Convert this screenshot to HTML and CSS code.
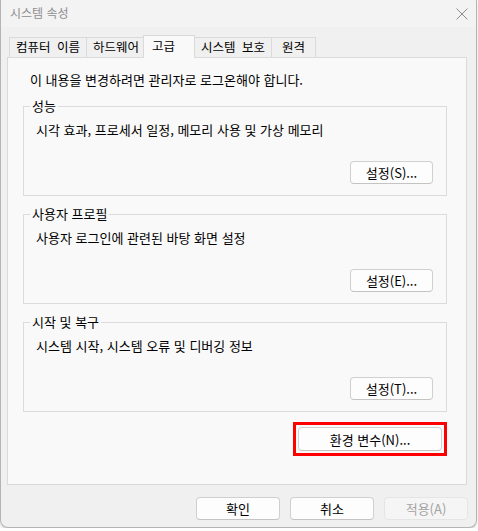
FILE: index.html
```html
<!DOCTYPE html>
<html lang="ko">
<head>
    <meta charset="UTF-8">
    <meta name="viewport" content="width=device-width, initial-scale=1.0">
    <title>시스템 속성</title>
    <link rel="stylesheet" href="styles.css">
</head>
<body>
    <div class="window">
        <div class="titlebar">
            <span class="title">시스템 속성</span>
            <svg class="close" width="12" height="12" viewBox="0 0 12 12">
                <path d="M0.5 0.5 L11.5 11.5 M11.5 0.5 L0.5 11.5" stroke="#8c8c8c" stroke-width="1" fill="none"/>
            </svg>
        </div>

        <div class="dialog">
            <div class="tabs">
                <div class="tab">컴퓨터 이름</div>
                <div class="tab">하드웨어</div>
                <div class="tab active">고급</div>
                <div class="tab">시스템 보호</div>
                <div class="tab">원격</div>
            </div>

            <div class="panel">
                <p class="intro">이 내용을 변경하려면 관리자로 로그온해야 합니다.</p>

                <fieldset class="group">
                    <legend>성능</legend>
                    <p>시각 효과, 프로세서 일정, 메모리 사용 및 가상 메모리</p>
                    <button class="btn">설정(S)...</button>
                </fieldset>

                <fieldset class="group">
                    <legend>사용자 프로필</legend>
                    <p>사용자 로그인에 관련된 바탕 화면 설정</p>
                    <button class="btn">설정(E)...</button>
                </fieldset>

                <fieldset class="group">
                    <legend>시작 및 복구</legend>
                    <p>시스템 시작, 시스템 오류 및 디버깅 정보</p>
                    <button class="btn">설정(T)...</button>
                </fieldset>

                <div class="highlight">
                    <button class="btn env">환경 변수(N)...</button>
                </div>
            </div>

            <div class="actions">
                <button class="btn">확인</button>
                <button class="btn">취소</button>
                <button class="btn" disabled>적용(A)</button>
            </div>
        </div>
    </div>
</body>
</html>
```

FILE: styles.css
```css
* {
    box-sizing: border-box;
}

body {
    margin: 0;
    background-color: #ffffff;
    font-family: "Noto Sans CJK KR", "Open Sans", sans-serif;
    font-size: 13px;
    color: #000;
}

.window {
    width: 477px;
    height: 528px;
    background-color: #f0f0f0;
    border: 1px solid #b4b4b4;
    border-top: none;
    border-radius: 0 0 8px 8px;
    box-shadow: 0 2px 3px rgba(0, 0, 0, 0.15);
    overflow: hidden;
}

.titlebar {
    height: 27px;
    background-color: #f3f3f3;
    display: flex;
    align-items: center;
    justify-content: space-between;
    padding: 0 8px 2px 9px;
}

.title {
    font-size: 12px;
    color: #8f8f8f;
    line-height: 16px;
}

.close {
    display: block;
    margin-top: 3px;
}

.dialog {
    padding: 8px 7px 0 6px;
}

.tabs {
    display: flex;
    align-items: flex-end;
    height: 22px;
    padding-left: 2px;
    font-size: 12.5px;
    word-spacing: 3px;
}

.tab {
    min-width: 45px;
    height: 20px;
    line-height: 18px;
    padding: 0 6px;
    text-align: center;
    border: 1px solid #dadada;
    border-bottom: none;
    margin-right: -1px;
    background-color: #f0f0f0;
}

.tab.active {
    position: relative;
    min-width: 52px;
    height: 23px;
    margin: 0 -1px -1px -2px;
    padding: 0 8px;
    line-height: 20px;
    text-align: left;
    background-color: #f9f9f9;
    z-index: 1;
}

.panel {
    width: 460px;
    height: 428px;
    background-color: #f9f9f9;
    border: 1px solid #dadada;
    padding: 0 19px 0 15px;
    display: flex;
    flex-direction: column;
}

.intro {
    margin: 14px 0 10px 7px;
    line-height: 16px;
}

.group {
    margin: 0 0 10px 0;
    padding: 8px 13px 11px 12px;
    border: 1px solid #dcdcdc;
    display: flex;
    flex-direction: column;
    min-width: 0;
}

.group legend {
    margin-left: -6px;
    padding: 0 2px;
    line-height: 16px;
}

.group p {
    margin: 0;
    line-height: 16px;
}

.btn {
    font-family: inherit;
    font-size: 13px;
    color: #000;
    width: 83px;
    height: 23px;
    padding: 0;
    background-color: #fdfdfd;
    border: 1px solid #d0d0d0;
    border-bottom-color: #c4c4c4;
    border-radius: 4px;
}

.group .btn {
    align-self: flex-end;
    margin-top: 23px;
}

.highlight {
    align-self: flex-end;
    border: 3px solid #ff0000;
    padding: 2px;
}

.btn.env {
    display: block;
    width: 144px;
    height: 24px;
}

.actions {
    display: flex;
    justify-content: flex-end;
    gap: 10px;
    margin-top: 12px;
    padding-right: 1px;
}

.actions .btn {
    width: 84px;
}

.btn:disabled {
    color: #a3a3a3;
    background-color: #f5f5f5;
    border-color: #e5e5e5;
}
```
